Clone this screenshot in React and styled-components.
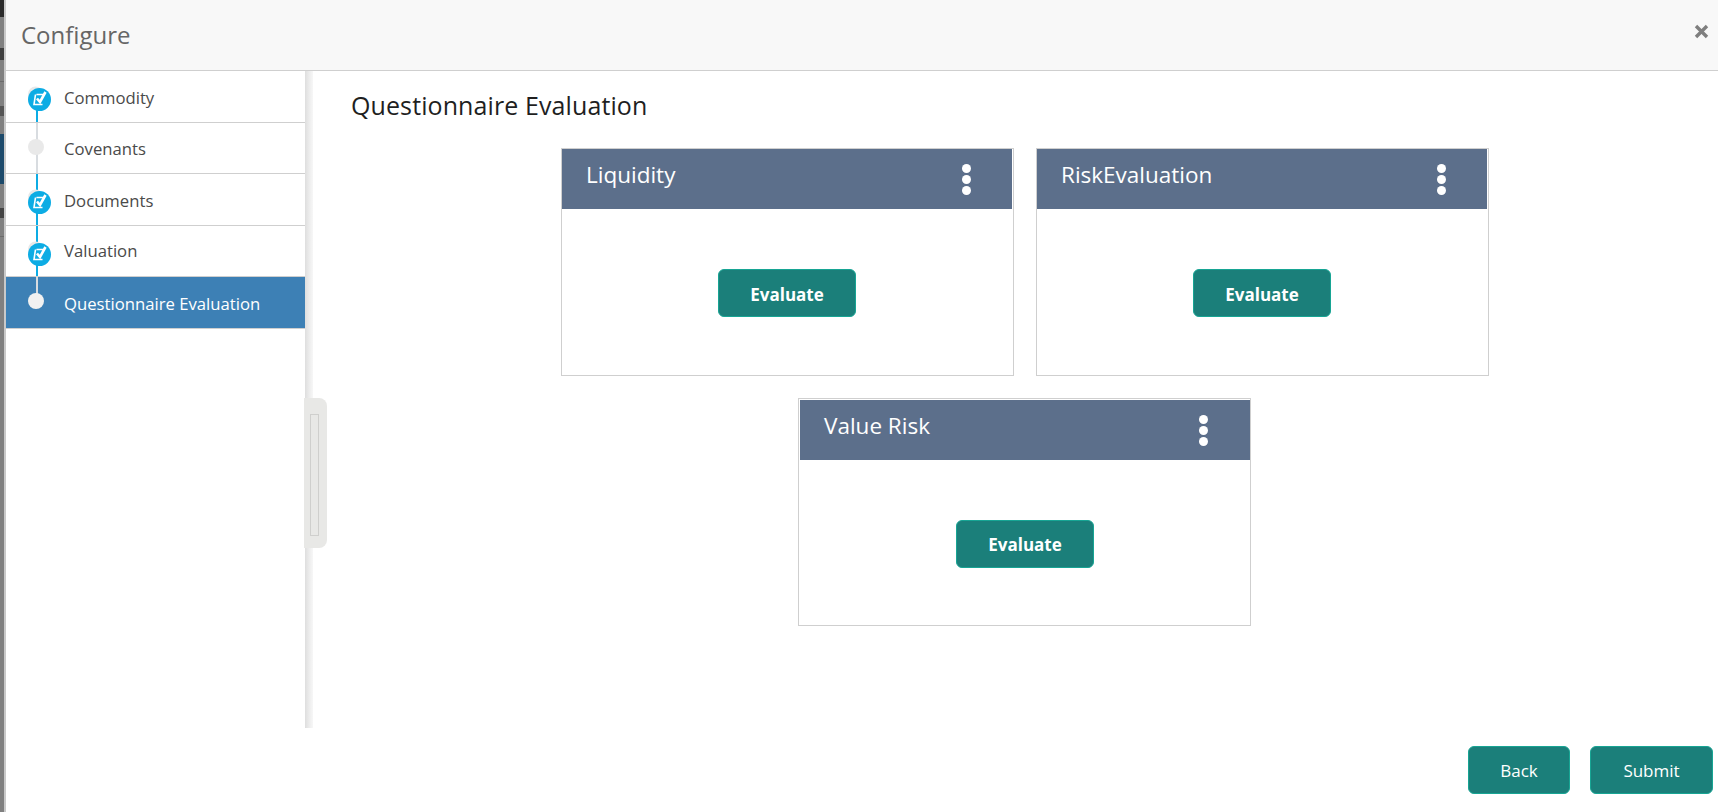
import React from "react";
import styled, { createGlobalStyle } from "styled-components";

const GlobalStyle = createGlobalStyle`
  html, body {
    margin: 0;
    padding: 0;
    height: 100%;
    overflow: hidden;
    background: #fff;
    font-family: "Open Sans", "Noto Sans", "Liberation Sans", sans-serif;
  }
  * { box-sizing: border-box; }
`;

const Page = styled.div`
  display: flex;
  width: 1718px;
  height: 812px;
`;

const Backdrop = styled.div`
  flex: 0 0 6px;
  border-right: 2px solid #c9c9c9;
  background: linear-gradient(
    to bottom,
    #2a2a2a 0 17px,
    #808080 17px 48px,
    #3f3f3f 48px 60px,
    #808080 60px 81px,
    #6a6a6a 81px 82px,
    #808080 82px 106px,
    #555 106px 116px,
    #808080 116px 134px,
    #1d4a6b 134px 184px,
    #808080 184px 208px,
    #444 208px 218px,
    #808080 218px 236px,
    #6a6a6a 236px 237px,
    #808080 237px 100%
  );
`;

const Modal = styled.div`
  flex: 1;
  display: flex;
  flex-direction: column;
  min-width: 0;
`;

const Header = styled.header`
  height: 71px;
  flex: none;
  display: flex;
  align-items: center;
  justify-content: space-between;
  padding: 0 9px 0 15px;
  background: #f8f8f8;
  border-bottom: 1px solid #cfcfcf;
`;

const ModalTitle = styled.h1`
  margin: 0 0 2px;
  font-size: 24px;
  font-weight: 400;
  color: #666;
`;

const CloseIcon = styled.svg`
  width: 15px;
  height: 15px;
  margin-bottom: 8px;
`;

const Body = styled.div`
  position: relative;
  height: 657px;
  flex: none;
  display: flex;
`;

const Sidebar = styled.nav`
  flex: 0 0 299px;
  display: flex;
  flex-direction: column;
`;

const SidebarEdge = styled.div`
  flex: 0 0 8px;
  background: linear-gradient(to right, #dedede, #eeeeee 60%, #f7f7f7);
`;

const StepRow = styled.div`
  display: flex;
  height: ${(props) => props.$height}px;
  padding-left: 30px;
  background: ${(props) => (props.$active ? "#3d80b5" : "#fff")};
  border-bottom: 1px solid #cfcfcf;
`;

const Rail = styled.div`
  position: relative;
  flex: 0 0 1.5px;
  margin-right: 26.5px;
  background: ${(props) => props.$line};
`;

const StepLabel = styled.span`
  align-self: center;
  margin-top: ${(props) => props.$shift}px;
  font-size: 16.7px;
  color: ${(props) => (props.$active ? "#fff" : "#4a4a4a")};
`;

const DoneMark = styled.svg`
  position: absolute;
  left: -10px;
  top: 14px;
  width: 28px;
  height: 28px;
`;

const PendingDot = styled.span`
  position: absolute;
  left: -8px;
  top: ${(props) => props.$top}px;
  width: 16px;
  height: 16px;
  border-radius: 50%;
  background: ${(props) => (props.$active ? "#f1f1f1" : "#e9e9e9")};
`;

const DragHandle = styled.div`
  position: absolute;
  left: 298px;
  top: 327px;
  width: 23px;
  height: 150px;
  padding: 16px 8px 12px 6px;
  background: #e8e8e6;
  border-radius: 0 8px 8px 0;
`;

const HandleGrip = styled.div`
  height: 100%;
  border: 1px solid #cfcfcd;
`;

const Main = styled.main`
  flex: 1;
  min-width: 0;
  padding: 16px 0 0 38px;
`;

const PageTitle = styled.h2`
  margin: 0 0 25px;
  height: 36px;
  line-height: 36px;
  font-size: 25px;
  font-weight: 400;
  letter-spacing: 0.1px;
  color: #1f1f1f;
`;

const CardGrid = styled.div`
  display: flex;
  flex-wrap: wrap;
  justify-content: center;
  gap: 22px;
  width: 950px;
  margin-left: 199px;
`;

const Card = styled.section`
  width: 453px;
  height: 228px;
  margin-left: ${(props) => (props.$inset ? "-1px" : "0")};
  padding: ${(props) => (props.$inset ? "1px 0 0 1px" : "0 1px 0 0")};
  display: flex;
  flex-direction: column;
  border: 1px solid #cfcfcf;
`;

const CardHeader = styled.div`
  height: 60px;
  flex: none;
  display: flex;
  justify-content: space-between;
  padding: 0 ${(props) => (props.$inset ? "42px" : "41px")} 0 24px;
  background: #5c6f8b;
`;

const CardTitle = styled.h3`
  margin: 10px 0 0;
  font-size: 22.5px;
  font-weight: 400;
  line-height: 32px;
  color: #fff;
`;

const MenuDots = styled.div`
  display: flex;
  flex-direction: column;
  justify-content: center;
  gap: 2px;
`;

const Dot = styled.span`
  width: 9px;
  height: 9px;
  border-radius: 50%;
  background: #fff;
`;

const CardBody = styled.div`
  flex: 1;
  display: flex;
  align-items: center;
  justify-content: center;
  padding-top: 2px;
`;

const Button = styled.button`
  height: 48px;
  width: ${(props) => props.$width}px;
  padding: ${(props) => (props.$strong ? "2px 0 0" : "0")};
  background: #1b7f7a;
  border: 1px solid #17a594;
  border-radius: 6px;
  color: #fff;
  font-family: inherit;
  font-size: 17px;
  font-weight: ${(props) => (props.$strong ? 700 : 400)};
`;

const Footer = styled.footer`
  display: flex;
  justify-content: flex-end;
  gap: 20px;
  padding: 18px 5px 0 0;
`;

const steps = [
  {
    label: "Commodity",
    done: true,
    height: 52,
    shift: 2,
    line: "linear-gradient(to bottom, transparent 0 38px, #0dace4 38px)",
  },
  {
    label: "Covenants",
    height: 51,
    shift: 0,
    dotTop: 16,
    line: "#d8dce0",
  },
  { label: "Documents", done: true, height: 52, shift: 1, line: "#0dace4" },
  { label: "Valuation", done: true, height: 51, shift: -1, line: "#0dace4" },
  {
    label: "Questionnaire Evaluation",
    active: true,
    height: 52,
    shift: 2,
    dotTop: 16,
    line: "linear-gradient(to bottom, #d8dce0 0 18px, transparent 18px)",
  },
];

const cards = [
  { name: "Liquidity" },
  { name: "RiskEvaluation" },
  { name: "Value Risk", inset: true },
];

const StepDoneIcon = () => (
  <DoneMark viewBox="0 0 28 28">
    <circle cx="9.5" cy="9" r="7.5" fill="#e9e9e9" />
    <circle cx="13.5" cy="14.5" r="11.5" fill="#0dace4" />
    <path
      d="M10.5 9.5H18.5M9.5 9.5L8 19.5H16.5"
      fill="none"
      stroke="#fff"
      strokeWidth="1.6"
    />
    <path
      d="M11 13.5L14 17L19.5 7"
      fill="none"
      stroke="#fff"
      strokeWidth="2.6"
    />
  </DoneMark>
);

const App = () => {
  return (
    <>
      <GlobalStyle />
      <Page>
        <Backdrop />
        <Modal>
          <Header>
            <ModalTitle>Configure</ModalTitle>
            <CloseIcon viewBox="0 0 15 15">
              <path
                d="M2 2L13 13M13 2L2 13"
                stroke="#7f7f7f"
                strokeWidth="3.4"
                fill="none"
              />
            </CloseIcon>
          </Header>
          <Body>
            <Sidebar>
              {steps.map((step) => (
                <StepRow
                  key={step.label}
                  $height={step.height}
                  $active={step.active}
                >
                  <Rail $line={step.line}>
                    {step.done ? (
                      <StepDoneIcon />
                    ) : (
                      <PendingDot $top={step.dotTop} $active={step.active} />
                    )}
                  </Rail>
                  <StepLabel $active={step.active} $shift={step.shift}>
                    {step.label}
                  </StepLabel>
                </StepRow>
              ))}
            </Sidebar>
            <SidebarEdge />
            <DragHandle>
              <HandleGrip />
            </DragHandle>
            <Main>
              <PageTitle>Questionnaire Evaluation</PageTitle>
              <CardGrid>
                {cards.map((card) => (
                  <Card key={card.name} $inset={card.inset}>
                    <CardHeader $inset={card.inset}>
                      <CardTitle>{card.name}</CardTitle>
                      <MenuDots>
                        <Dot />
                        <Dot />
                        <Dot />
                      </MenuDots>
                    </CardHeader>
                    <CardBody>
                      <Button $width={138} $strong>
                        Evaluate
                      </Button>
                    </CardBody>
                  </Card>
                ))}
              </CardGrid>
            </Main>
          </Body>
          <Footer>
            <Button $width={102}>Back</Button>
            <Button $width={123}>Submit</Button>
          </Footer>
        </Modal>
      </Page>
    </>
  );
};

export default App;
